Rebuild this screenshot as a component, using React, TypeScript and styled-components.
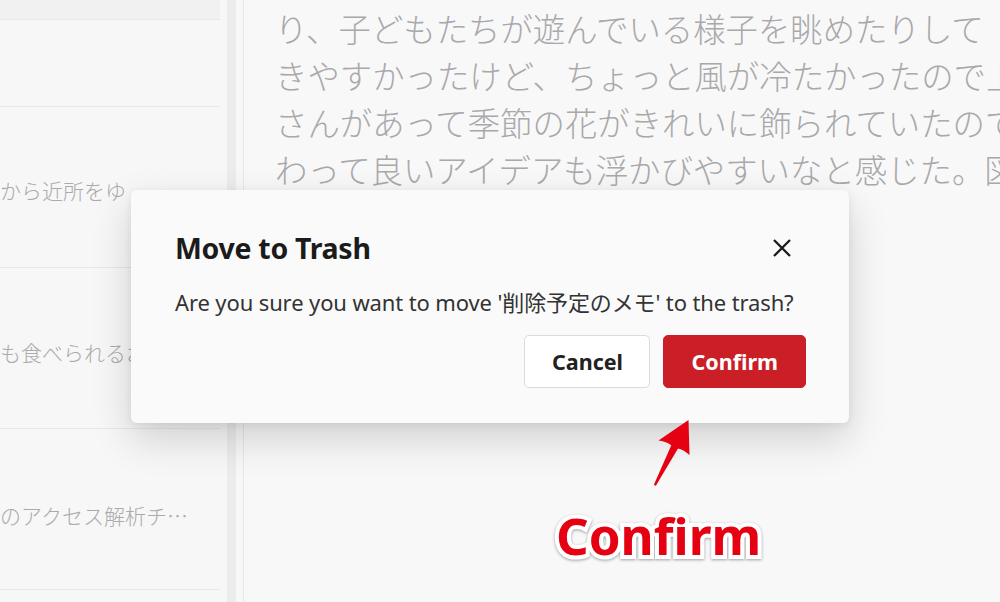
import React from "react"
import styled, { createGlobalStyle } from "styled-components"

const GlobalStyle = createGlobalStyle`
  html, body {
    margin: 0;
    padding: 0;
    background: #f7f7f8;
  }
  * {
    box-sizing: border-box;
  }
`

const jp = `"Noto Sans CJK JP", "Noto Sans", sans-serif`
const ui = `"Noto Sans", "Open Sans", "Noto Sans CJK JP", sans-serif`

const Page = styled.div`
  position: relative;
  width: 1000px;
  height: 602px;
  overflow: hidden;
  display: flex;
  background: #f8f8f9;
`

const Sidebar = styled.aside`
  width: 244px;
  flex-shrink: 0;
  display: flex;
  border-right: 1px solid #e6e6e8;
  background: #f7f7f8;
`

const List = styled.ul`
  list-style: none;
  margin: 0;
  padding: 0;
  width: 220px;
  display: flex;
  flex-direction: column;
`

const Row = styled.li<{ $h: number; $selected?: boolean }>`
  height: ${(p) => p.$h}px;
  flex-shrink: 0;
  border-bottom: 1px solid #e8e8ea;
  background: ${(p) => (p.$selected ? "#f1f1f2" : "transparent")};
`

const Snippet = styled.div<{ $top: number }>`
  width: 196px;
  margin-top: ${(p) => p.$top}px;
  font-family: ${jp};
  font-weight: 300;
  font-size: 21px;
  line-height: 28px;
  color: #aaaaac;
  white-space: nowrap;
  overflow: hidden;
  text-overflow: ellipsis;
`

const ScrollTrack = styled.div`
  width: 9px;
  margin-left: 7px;
  background: #ececed;
`

const Editor = styled.main`
  flex: 1;
  padding: 4px 0 0 31px;
  overflow: hidden;
  font-family: ${jp};
  font-weight: 300;
  font-size: 32.4px;
  line-height: 47px;
  color: #a9a9ab;
`

const Line = styled.div`
  white-space: nowrap;
`

const Dialog = styled.section`
  position: absolute;
  left: 131px;
  top: 190px;
  width: 718px;
  height: 233px;
  padding: 38px 43px 35px 44px;
  background: #fafafa;
  border-radius: 6px;
  box-shadow: 0 16px 40px rgba(0, 0, 0, 0.16), 0 2px 8px rgba(0, 0, 0, 0.07);
  display: flex;
  flex-direction: column;
  font-family: ${ui};
`

const Header = styled.header`
  display: flex;
  align-items: center;
  justify-content: space-between;
  height: 40px;
`

const Title = styled.h2`
  margin: 0;
  font-size: 28.5px;
  font-weight: 700;
  color: #1b1b1b;
  letter-spacing: -0.3px;
`

const CloseButton = styled.button`
  border: none;
  background: none;
  padding: 0;
  margin-right: 13px;
  width: 22px;
  height: 22px;
  display: flex;
  align-items: center;
  justify-content: center;
  color: #1b1b1b;
`

const Body = styled.p`
  margin: 20px 0 0;
  font-size: 22px;
  line-height: 28px;
  color: #333;
  white-space: nowrap;
  letter-spacing: -0.12px;
`

const Actions = styled.div`
  margin-top: 19px;
  display: flex;
  justify-content: flex-end;
  gap: 13px;
`

const Button = styled.button<{ $primary?: boolean }>`
  height: 53px;
  padding: 0 ${(p) => (p.$primary ? 27 : 26.5)}px;
  border-radius: 5px;
  font-family: ${ui};
  font-size: 21.5px;
  font-weight: 700;
  border: 1px solid ${(p) => (p.$primary ? "#c91f28" : "#dcdcdc")};
  background: ${(p) => (p.$primary ? "#cb1f28" : "#ffffff")};
  color: ${(p) => (p.$primary ? "#ffffff" : "#222222")};
`

const Callout = styled.div`
  position: absolute;
  left: 540px;
  top: 400px;
  width: 240px;
  height: 180px;
`

const ArrowSvg = styled.svg`
  position: absolute;
  left: 0;
  top: 0;
`

const Label = styled.div`
  position: absolute;
  left: 16px;
  top: 102px;
  font-family: ${ui};
  font-weight: 700;
  font-size: 51px;
  line-height: 66px;
  color: #e50012;
  -webkit-text-stroke: 8px #ffffff;
  paint-order: stroke fill;
  filter: drop-shadow(0 1px 1.5px rgba(0, 0, 0, 0.35));
`

export default function App() {
  return (
    <>
      <GlobalStyle />
      <Page>
        <Sidebar>
          <List>
            <Row $h={20} $selected />
            <Row $h={87} />
            <Row $h={161}>
              <Snippet $top={69}>から近所をゆ</Snippet>
            </Row>
            <Row $h={161}>
              <Snippet $top={70}>も食べられるお店を見つけた</Snippet>
            </Row>
            <Row $h={161}>
              <Snippet $top={72}>のアクセス解析チェックをした</Snippet>
            </Row>
            <Row $h={40} />
          </List>
          <ScrollTrack />
        </Sidebar>
        <Editor>
          <Line>り、子どもたちが遊んでいる様子を眺めたりして</Line>
          <Line>きやすかったけど、ちょっと風が冷たかったので上着</Line>
          <Line>さんがあって季節の花がきれいに飾られていたので</Line>
          <Line>わって良いアイデアも浮かびやすいなと感じた。図</Line>
        </Editor>
        <Dialog role="dialog">
          <Header>
            <Title>Move to Trash</Title>
            <CloseButton aria-label="Close">
              <svg width="20" height="20" viewBox="0 0 20 20">
                <path d="M2 2 L18 18 M18 2 L2 18" stroke="currentColor" strokeWidth="2.3" />
              </svg>
            </CloseButton>
          </Header>
          <Body>Are you sure you want to move '削除予定のメモ' to the trash?</Body>
          <Actions>
            <Button>Cancel</Button>
            <Button $primary>Confirm</Button>
          </Actions>
        </Dialog>
        <Callout>
          <ArrowSvg width="240" height="100" viewBox="0 0 240 100">
            <path
              d="M148.5 20 L149.5 55 Q143 49 138 48.4 L116 85.6 Q114.6 86 114 84.6 L131.3 45.2 Q125 41 118.5 40.5 Z"
              fill="#e50012"
            />
          </ArrowSvg>
          <Label>Confirm</Label>
        </Callout>
      </Page>
    </>
  )
}
